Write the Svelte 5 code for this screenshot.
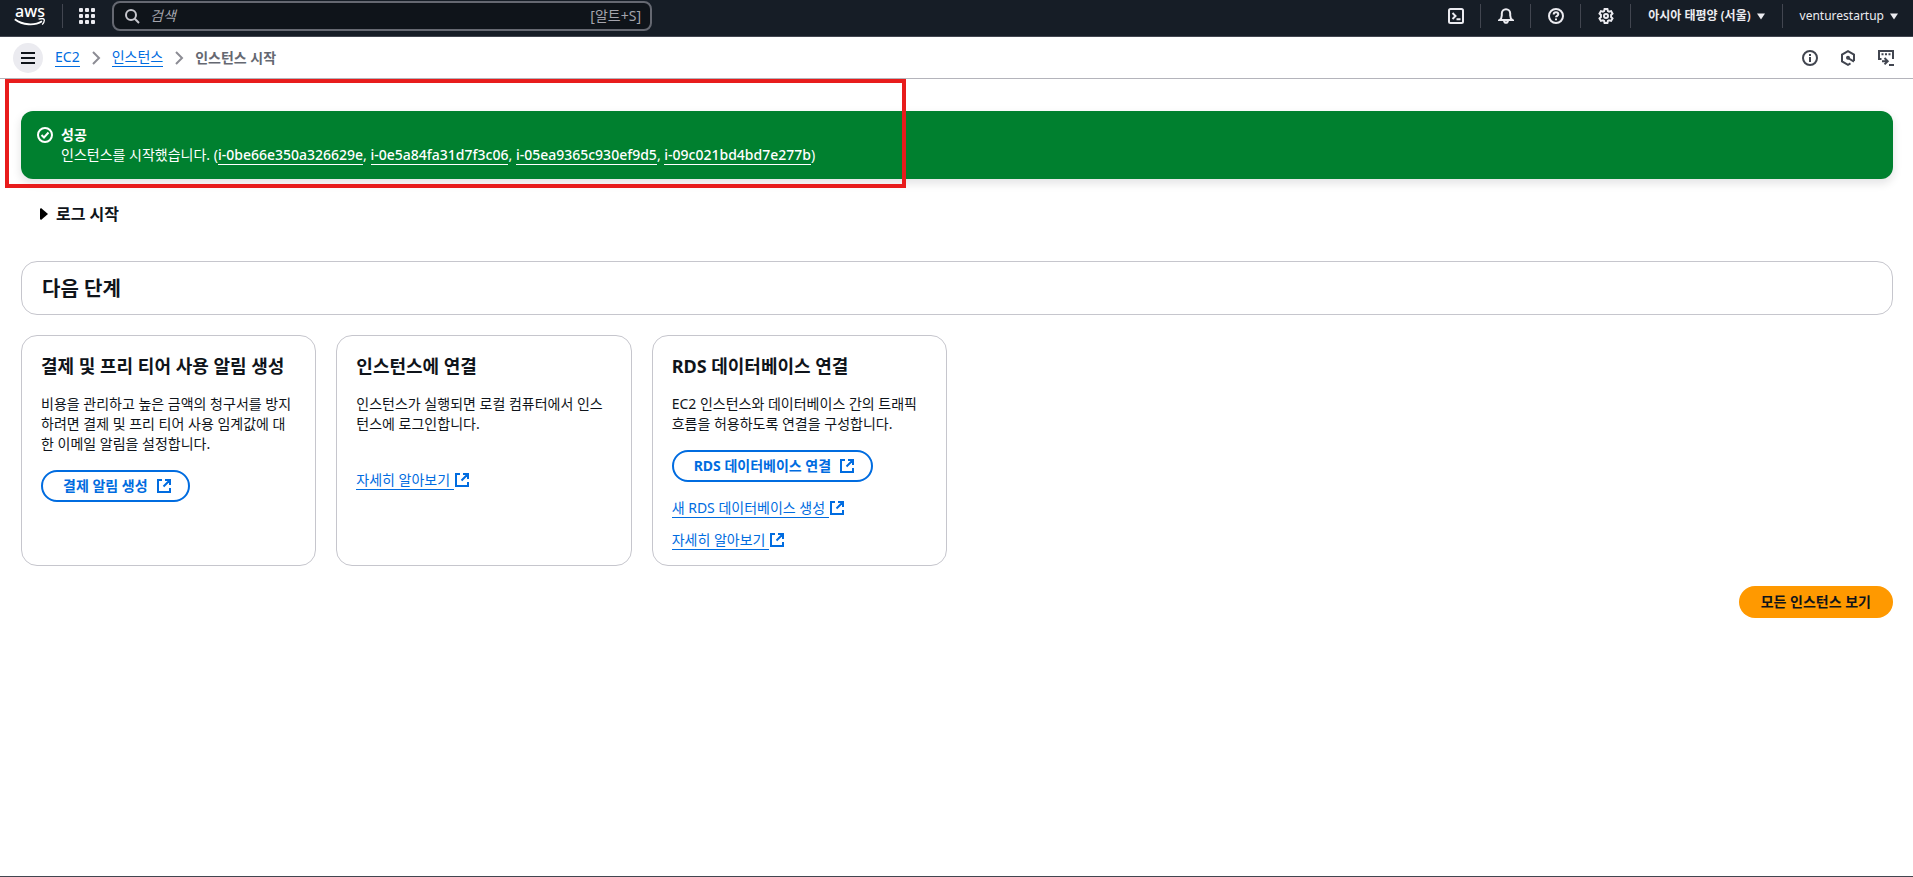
<script lang="ts">
  let search = $state("");

  const instances = [
    "i-0be66e350a326629e",
    "i-0e5a84fa31d7f3c06",
    "i-05ea9365c930ef9d5",
    "i-09c021bd4bd7e277b",
  ];

  const steps = [
    {
      title: "결제 및 프리 티어 사용 알림 생성",
      text: "비용을 관리하고 높은 금액의 청구서를 방지하려면 결제 및 프리 티어 사용 임계값에 대한 이메일 알림을 설정합니다.",
      action: "결제 알림 생성",
      links: [],
    },
    {
      title: "인스턴스에 연결",
      text: "인스턴스가 실행되면 로컬 컴퓨터에서 인스턴스에 로그인합니다.",
      links: ["자세히 알아보기"],
    },
    {
      title: "RDS 데이터베이스 연결",
      text: "EC2 인스턴스와 데이터베이스 간의 트래픽 흐름을 허용하도록 연결을 구성합니다.",
      action: "RDS 데이터베이스 연결",
      links: ["새 RDS 데이터베이스 생성", "자세히 알아보기"],
    },
  ];
</script>

{#snippet external()}
  <svg class="icon" viewBox="0 0 16 16" aria-hidden="true">
    <path d="M6 2H2v12h12v-4M9 2h5v5M14 2L7.5 8.5" />
  </svg>
{/snippet}

{#snippet chevron()}
  <svg class="icon chevron" viewBox="0 0 16 16" aria-hidden="true">
    <path d="M5 2l6 6-6 6" />
  </svg>
{/snippet}

{#snippet caret()}
  <svg class="caret" viewBox="0 0 8 6" aria-hidden="true">
    <path d="M0 0h8L4 6z" />
  </svg>
{/snippet}

<div class="page">
  <header class="topbar">
    <a class="logo" href="#home" aria-label="aws">
      <span>aws</span>
      <svg viewBox="0 0 32 9" aria-hidden="true">
        <path
          d="M0.8 1.2C8.5 7.2 20.5 8 28 3.2"
          fill="none"
          stroke="#fff"
          stroke-width="1.8"
        />
        <path
          d="M24.6 1.2c2.6-.8 4.6-.8 5.4 0 .6 1.2-.2 3.6-1.8 5.4"
          fill="none"
          stroke="#fff"
          stroke-width="1.3"
        />
      </svg>
    </a>

    <button class="apps" type="button" aria-label="서비스">
      <svg viewBox="0 0 16 16" aria-hidden="true">
        {#each [0, 6, 12] as y}
          {#each [0, 6, 12] as x}
            <rect {x} {y} width="4" height="4" rx="1" />
          {/each}
        {/each}
      </svg>
    </button>

    <label class="search">
      <svg class="icon" viewBox="0 0 16 16" aria-hidden="true">
        <circle cx="7" cy="7" r="5" />
        <path d="M10.8 10.8L15 15" />
      </svg>
      <input type="text" placeholder="검색" aria-label="검색" bind:value={search} />
      <span>[알트+S]</span>
    </label>

    <nav class="tools">
      <button type="button" aria-label="CloudShell">
        <svg class="icon" viewBox="0 0 16 16" aria-hidden="true">
          <rect x="1" y="1" width="14" height="14" rx="1.5" />
          <path d="M4.5 5l3 3-3 3M8.5 11.2h4" />
        </svg>
      </button>
      <button type="button" aria-label="알림">
        <svg class="icon" viewBox="0 0 16 16" aria-hidden="true">
          <path
            d="M1.5 12h13c-1.6-1-2.3-2.4-2.3-4.4V5.6C12.2 3 10.4 1.2 8 1.2S3.8 3 3.8 5.6v2c0 2-.7 3.4-2.3 4.4zM6 12.5c.2 1.5 1 2.2 2 2.2s1.8-.7 2-2.2"
          />
        </svg>
      </button>
      <button type="button" aria-label="도움말">
        <svg class="icon" viewBox="0 0 16 16" aria-hidden="true">
          <circle cx="8" cy="8" r="7" />
          <path d="M5.7 6.5C5.7 5 6.7 4.3 8 4.3s2.3.8 2.3 2c0 1.5-2.3 1.5-2.3 3M8 10.5v1.7" />
        </svg>
      </button>
      <button type="button" aria-label="설정">
        <svg class="icon" viewBox="0 0 16 16" aria-hidden="true">
          <path
            d="M6.6 1h2.8l.5 2 1.2.7 2-.6 1.4 2.4L13.1 7v2l1.4 1.5-1.4 2.4-2-.6-1.2.7-.5 2H6.6l-.5-2-1.2-.7-2 .6-1.4-2.4L2.9 9V7L1.5 5.5l1.4-2.4 2 .6L6.1 3z"
          />
          <circle cx="8" cy="8" r="2" />
        </svg>
      </button>
      <button class="menu" type="button">아시아 태평양 (서울) {@render caret()}</button>
      <button class="menu account" type="button">venturestartup {@render caret()}</button>
    </nav>
  </header>

  <div class="subnav">
    <button class="burger" type="button" aria-label="메뉴">
      <svg class="icon" viewBox="0 0 16 16" aria-hidden="true">
        <path d="M1 3h14M1 8h14M1 13h14" />
      </svg>
    </button>
    <nav class="breadcrumbs">
      <a class="link" href="#ec2">EC2</a>
      {@render chevron()}
      <a class="link" href="#instances">인스턴스</a>
      {@render chevron()}
      <span>인스턴스 시작</span>
    </nav>
    <div class="panels">
      <button type="button" aria-label="정보">
        <svg class="icon" viewBox="0 0 16 16" aria-hidden="true">
          <circle cx="8" cy="8" r="7" />
          <path d="M8 7v5M8 4v2" />
        </svg>
      </button>
      <button type="button" aria-label="진단">
        <svg class="icon" viewBox="0 0 16 16" aria-hidden="true">
          <path d="M14 11V4.6L8 1.2 2 4.6v6.8l6 3.4 2.5-1.4M8 8l6 3.6" />
          <circle cx="8" cy="7.8" r="1" />
        </svg>
      </button>
      <button type="button" aria-label="터미널">
        <svg class="icon" viewBox="0 0 16 16" aria-hidden="true">
          <path d="M3.5 9H1V1h14v8M3.5 4.200h2M7 4.200h2M10.500 4.200h2M4 11.200h5M6.500 8l3.200 3.200-3.200 3.200M11 15h5" />
        </svg>
      </button>
    </div>
  </div>

  <main>
    <section class="flash">
      <svg class="icon" viewBox="0 0 16 16" aria-hidden="true">
        <circle cx="8" cy="8" r="7" />
        <path d="M4.5 8l2.5 2.5 4.5-5" />
      </svg>
      <div>
        <strong>성공</strong>
        <p>
          인스턴스를 시작했습니다. ({#each instances as id, index (id)}<a href="#{id}">{id}</a
            >{index < instances.length - 1 ? ", " : ""}{/each})
        </p>
      </div>
    </section>

    <details class="log">
      <summary>
        <svg viewBox="0 0 8 12" aria-hidden="true"><path d="M0 1l1-1 7 6-7 6-1-1z" /></svg>
        로그 시작
      </summary>
    </details>

    <section class="box next">
      <h2>다음 단계</h2>
    </section>

    <div class="cards">
      {#each steps as step (step.title)}
        <article class="box card">
          <h3>{step.title}</h3>
          <p>{step.text}</p>
          {#if step.action}
            <button class="button outline" type="button">
              {step.action}
              {@render external()}
            </button>
          {/if}
          <div class="links" class:spaced={!step.action}>
            {#each step.links as link (link)}
              <a class="more" href="#more">
                <span class="link">{link}&nbsp;</span>{@render external()}
              </a>
            {/each}
          </div>
        </article>
      {/each}
    </div>

    <div class="actions">
      <button class="button primary" type="button">모든 인스턴스 보기</button>
    </div>

    <div class="highlight"></div>
  </main>
</div>

<style>
  :global(body) {
    margin: 0;
  }

  .page {
    background: #fff;
    border-bottom: 1px solid #424650;
    box-sizing: border-box;
    color: #0f141a;
    display: flex;
    flex-direction: column;
    font-family: "Noto Sans", "Noto Sans CJK KR", sans-serif;
    font-size: 14px;
    line-height: 20px;
    min-height: 100vh;
  }

  button {
    align-items: center;
    background: none;
    border: 0;
    color: inherit;
    cursor: pointer;
    display: flex;
    font: inherit;
    justify-content: center;
    padding: 0;
  }

  h2,
  h3,
  p {
    margin: 0;
  }

  .icon {
    fill: none;
    flex: none;
    height: 16px;
    stroke: currentColor;
    stroke-width: 2;
    width: 16px;
  }

  .link {
    border-bottom: 1px solid #006ce0;
    color: #006ce0;
    line-height: 18px;
    text-decoration: none;
  }

  .topbar {
    align-items: center;
    background: #161d26;
    border-bottom: 1px solid #424650;
    color: #ebebf0;
    display: flex;
    height: 32px;
    padding-bottom: 4px;
  }

  .logo {
    border-right: 1px solid #424650;
    color: #fff;
    font-size: 16px;
    font-weight: 500;
    height: 24px;
    line-height: 14px;
    padding: 0 16px 0 14px;
    text-decoration: none;
  }

  .logo span {
    display: block;
    text-align: center;
  }

  .logo svg {
    display: block;
    width: 32px;
  }

  .apps {
    padding: 0 17px 0 16px;
  }

  .apps svg {
    fill: #ebebf0;
    height: 16px;
    width: 16px;
  }

  .search {
    align-items: center;
    background: #0f141a;
    border: 2px solid #656871;
    border-radius: 8px;
    box-sizing: border-box;
    color: #a4a4ad;
    display: flex;
    gap: 10px;
    height: 30px;
    padding: 0 9px 0 10px;
    width: 540px;
  }

  .search .icon {
    color: #c6c6cd;
  }

  .search input {
    background: none;
    border: 0;
    color: #fff;
    flex: 1;
    font: inherit;
    min-width: 0;
    outline: 0;
    padding: 0;
  }

  .search input::placeholder {
    color: #a4a4ad;
    font-style: italic;
  }

  .tools {
    align-items: center;
    display: flex;
    margin-left: auto;
  }

  .tools button {
    height: 24px;
    width: 49px;
  }

  .tools button + button {
    border-left: 1px solid #424650;
    width: 50px;
  }

  .tools button.menu {
    font-size: 12px;
    font-weight: 600;
    gap: 6px;
    padding: 0 17px;
    width: auto;
  }

  .tools button.account {
    font-weight: 400;
    padding-right: 15px;
  }

  .caret {
    fill: #ebebf0;
    height: 7px;
    width: 8px;
  }

  .subnav {
    align-items: center;
    border-bottom: 1px solid #b4b4bb;
    display: flex;
    height: 41px;
    padding: 0 19px 0 13px;
  }

  .burger {
    background: #ebebf0;
    border-radius: 50%;
    height: 30px;
    width: 30px;
  }

  .breadcrumbs {
    align-items: center;
    display: flex;
    gap: 8px;
    margin-left: 12px;
  }

  .breadcrumbs span {
    color: #656871;
    font-weight: 700;
  }

  .chevron {
    color: #8c8c94;
  }

  .panels {
    color: #424650;
    display: flex;
    gap: 22px;
    margin-left: auto;
  }

  main {
    flex: 1;
    padding: 32px 20px 24px 21px;
    position: relative;
  }

  .flash {
    background: #00802f;
    border-radius: 12px;
    box-shadow: 0 4px 8px 1px rgb(0 7 22 / 0.1);
    color: #fff;
    display: flex;
    gap: 8px;
    padding: 14px 16px;
  }

  .flash .icon {
    margin-top: 2px;
  }

  .flash strong {
    display: block;
  }

  .flash a {
    border-bottom: 1px solid #fff;
    color: inherit;
    font-weight: 500;
    text-decoration: none;
  }

  .log {
    font-size: 16px;
    font-weight: 700;
    line-height: 22px;
    margin: 24px 0 36px;
  }

  .log summary {
    align-items: center;
    cursor: pointer;
    display: flex;
    gap: 8px;
    padding-left: 19px;
    width: fit-content;
  }

  .log svg {
    height: 12px;
    width: 8px;
  }

  .box {
    border: 1px solid #c6c6cd;
    border-radius: 16px;
  }

  .next {
    padding: 15px 20px 13px;
  }

  .next h2 {
    font-size: 20px;
    line-height: 24px;
  }

  .cards {
    display: grid;
    gap: 20px;
    grid-template-columns: repeat(6, 1fr);
    margin-top: 20px;
  }

  .card {
    padding: 19px 19px 15px;
  }

  .card h3 {
    font-size: 18px;
    line-height: 23px;
    margin-bottom: 16px;
    white-space: nowrap;
  }

  .button {
    border-radius: 16px;
    font-weight: 700;
    height: 32px;
    padding: 0 22px;
  }

  .outline {
    border: 2px solid #006ce0;
    color: #006ce0;
    gap: 8px;
    margin-top: 16px;
    padding: 0 16px 0 20px;
  }

  .links {
    display: flex;
    flex-direction: column;
    gap: 12px;
    margin-top: 16px;
  }

  .links.spaced {
    margin-top: 36px;
  }

  .more {
    align-items: center;
    color: #006ce0;
    display: flex;
    height: 20px;
    text-decoration: none;
  }

  .actions {
    display: flex;
    justify-content: flex-end;
    margin-top: 20px;
  }

  .primary {
    background: #ff9900;
  }

  .highlight {
    border: 4px solid #e81c1c;
    box-sizing: border-box;
    height: 109px;
    left: 5px;
    pointer-events: none;
    position: absolute;
    top: 0;
    width: 901px;
  }
</style>
